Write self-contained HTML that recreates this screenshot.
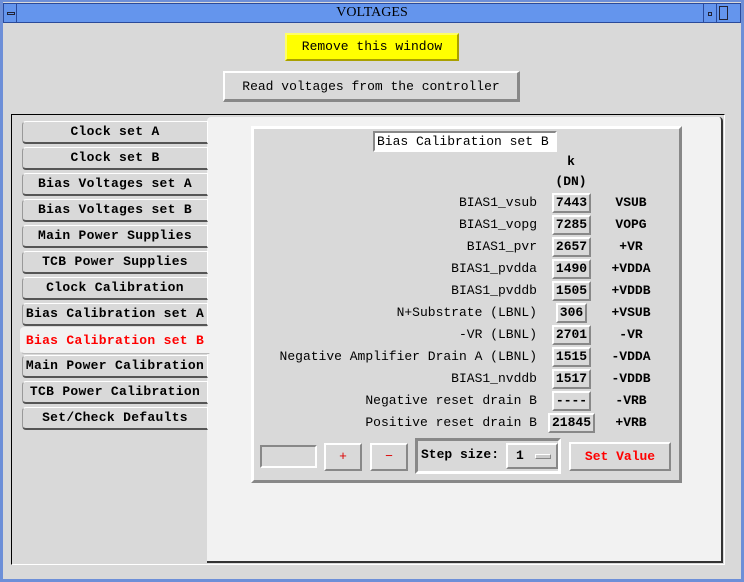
<!DOCTYPE html>
<html><head><style>
*{box-sizing:border-box;margin:0;padding:0}
body{width:744px;height:582px;background:#d9d9d9;position:relative;overflow:hidden;font-family:"Liberation Mono",monospace;font-size:13px;color:#000}
.a{position:absolute}
.btn{position:absolute;border:2px solid;border-color:#fff #888 #888 #fff;background:#d9d9d9;text-align:center;white-space:nowrap}
.tab{position:absolute;left:22px;width:186px;height:23px;border:1px solid;border-color:#fff #fff #555 #999;border-radius:4px 0 0 4px;border-bottom:2px solid #555;background:#d9d9d9;text-align:center;font-weight:bold;line-height:20px;white-space:nowrap;letter-spacing:0.3px}
.lbl{position:absolute;right:207px;white-space:nowrap;text-align:right;line-height:16px}
.val{position:absolute;height:20px;border:2px solid;border-color:#fff #888 #888 #fff;background:#d9d9d9;text-align:center;line-height:16px;font-weight:bold}
.unit{position:absolute;left:600px;width:62px;text-align:center;line-height:16px;font-weight:bold}
</style></head><body>
<!-- window frame -->
<div class="a" style="left:0;top:0;width:744px;height:582px;border:3px solid #6d8fd8;border-top-width:2px"></div>
<div class="a" style="left:3px;top:3px;width:738px;height:20px;background:#6495ed;border:1px solid #2a4a9a"></div>
<div class="a" style="left:4px;top:4px;width:13px;height:18px;border-right:1px solid #2a4a9a"></div>
<div class="a" style="left:7px;top:12px;width:8px;height:3px;border:1px solid #223"></div>
<div class="a" style="left:703px;top:4px;width:14px;height:18px;border-left:1px solid #2a4a9a;border-right:1px solid #2a4a9a"></div>
<div class="a" style="left:708px;top:12px;width:4px;height:4px;border:1px solid #223"></div>
<div class="a" style="left:719px;top:6px;width:9px;height:14px;border:1px solid #223"></div>
<div class="a" style="left:0;top:4px;width:744px;text-align:center;font-family:'Liberation Serif',serif;font-size:14px;line-height:18px">VOLTAGES</div>
<!-- top buttons -->
<div class="btn" style="left:285px;top:33px;width:174px;height:28px;background:#ffff00;border-color:#ffff66 #aaa000 #aaa000 #ffff66;line-height:24px">Remove this window</div>
<div class="btn" style="left:223px;top:71px;width:297px;height:31px;line-height:27px;border-width:2px 3px 3px 2px">Read voltages from the controller</div>
<!-- notebook -->
<div class="a" style="left:11px;top:114px;width:714px;height:451px;border:1px solid #000;border-right-color:#fff;border-bottom-color:#fff"></div>
<div class="a" style="left:207px;top:117px;width:516px;height:446px;background:#f2f2f2;border-radius:4px 4px 0 0;border-right:2px solid #333;border-bottom:2px solid #333"></div>
<div class="tab" style="top:121px">Clock set A</div>
<div class="tab" style="top:147px">Clock set B</div>
<div class="tab" style="top:173px">Bias Voltages set A</div>
<div class="tab" style="top:199px">Bias Voltages set B</div>
<div class="tab" style="top:225px">Main Power Supplies</div>
<div class="tab" style="top:251px">TCB Power Supplies</div>
<div class="tab" style="top:277px">Clock Calibration</div>
<div class="tab" style="top:303px">Bias Calibration set A</div>
<div class="tab" style="top:327px;left:20px;width:190px;height:27px;background:#f2f2f2;color:#f00;border-color:#f2f2f2;line-height:26px;border-bottom:1px solid #bbb">Bias Calibration set B</div>
<div class="tab" style="top:355px">Main Power Calibration</div>
<div class="tab" style="top:381px">TCB Power Calibration</div>
<div class="tab" style="top:407px">Set/Check Defaults</div>
<!-- inner panel -->
<div class="a" style="left:251px;top:126px;width:431px;height:357px;background:#d9d9d9;border:3px solid;border-color:#fff #888 #888 #fff"></div>
<div class="a" style="left:373px;top:131px;width:184px;height:21px;background:#fff;border:2px solid;border-color:#888 #fff #fff #888;line-height:17px;padding-left:2px;white-space:nowrap">Bias Calibration set B</div>
<div class="a" style="left:551px;top:154px;width:40px;text-align:center;font-weight:bold">k</div>
<div class="a" style="left:551px;top:174px;width:40px;text-align:center;font-weight:bold">(DN)</div>

<div class="lbl" style="top:195px">BIAS1_vsub</div><div class="val" style="left:552px;top:193px;width:39px">7443</div><div class="unit" style="top:195px">VSUB</div>
<div class="lbl" style="top:217px">BIAS1_vopg</div><div class="val" style="left:552px;top:215px;width:39px">7285</div><div class="unit" style="top:217px">VOPG</div>
<div class="lbl" style="top:239px">BIAS1_pvr</div><div class="val" style="left:552px;top:237px;width:39px">2657</div><div class="unit" style="top:239px">+VR</div>
<div class="lbl" style="top:261px">BIAS1_pvdda</div><div class="val" style="left:552px;top:259px;width:39px">1490</div><div class="unit" style="top:261px">+VDDA</div>
<div class="lbl" style="top:283px">BIAS1_pvddb</div><div class="val" style="left:552px;top:281px;width:39px">1505</div><div class="unit" style="top:283px">+VDDB</div>
<div class="lbl" style="top:305px">N+Substrate (LBNL)</div><div class="val" style="left:556px;top:303px;width:31px">306</div><div class="unit" style="top:305px">+VSUB</div>
<div class="lbl" style="top:327px">-VR (LBNL)</div><div class="val" style="left:552px;top:325px;width:39px">2701</div><div class="unit" style="top:327px">-VR</div>
<div class="lbl" style="top:349px">Negative Amplifier Drain A (LBNL)</div><div class="val" style="left:552px;top:347px;width:39px">1515</div><div class="unit" style="top:349px">-VDDA</div>
<div class="lbl" style="top:371px">BIAS1_nvddb</div><div class="val" style="left:552px;top:369px;width:39px">1517</div><div class="unit" style="top:371px">-VDDB</div>
<div class="lbl" style="top:393px">Negative reset drain B</div><div class="val" style="left:552px;top:391px;width:39px">----</div><div class="unit" style="top:393px">-VRB</div>
<div class="lbl" style="top:415px">Positive reset drain B</div><div class="val" style="left:548px;top:413px;width:47px">21845</div><div class="unit" style="top:415px">+VRB</div>

<!-- bottom controls -->
<div class="a" style="left:260px;top:445px;width:57px;height:23px;border:2px solid;border-color:#888 #fff #fff #888;background:#d9d9d9"></div>
<div class="btn" style="left:324px;top:443px;width:38px;height:28px;color:#d00;line-height:24px">+</div>
<div class="btn" style="left:370px;top:443px;width:38px;height:28px;color:#d00;line-height:24px">&minus;</div>
<div class="a" style="left:415px;top:438px;width:146px;height:36px;border:3px solid;border-color:#888 #fff #fff #888"></div>
<div class="a" style="left:421px;top:447px;line-height:16px;font-weight:bold">Step size:</div>
<div class="btn" style="left:506px;top:443px;width:52px;height:26px;border-color:#fff #888 #888 #fff;line-height:22px;text-align:left;padding-left:8px;font-weight:bold">1</div>
<div class="a" style="left:535px;top:454px;width:16px;height:5px;border:1px solid;border-color:#fff #888 #888 #fff;background:#ccc"></div>
<div class="btn" style="left:569px;top:442px;width:102px;height:29px;color:#f00;line-height:25px;font-weight:bold">Set Value</div>
</body></html>
